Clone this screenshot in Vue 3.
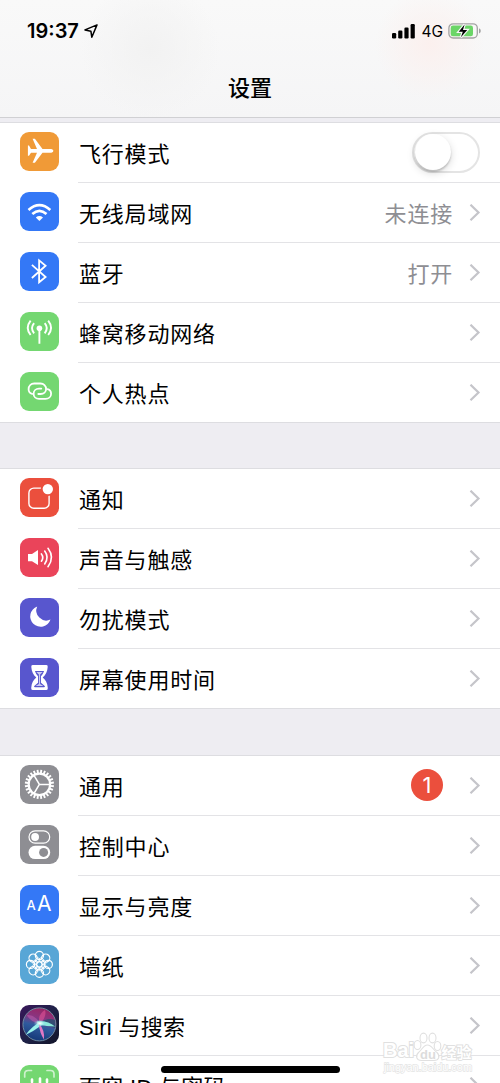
<script setup>
const sections = [
  {
    key: 'network',
    rows: [
      { icon: 'plane', label: '飞行模式', toggle: true },
      { icon: 'wifi', label: '无线局域网', value: '未连接' },
      { icon: 'bluetooth', label: '蓝牙', value: '打开' },
      { icon: 'cellular', label: '蜂窝移动网络' },
      { icon: 'hotspot', label: '个人热点' },
    ],
  },
  {
    key: 'alerts',
    rows: [
      { icon: 'notify', label: '通知' },
      { icon: 'sound', label: '声音与触感' },
      { icon: 'moon', label: '勿扰模式' },
      { icon: 'hourglass', label: '屏幕使用时间' },
    ],
  },
  {
    key: 'general',
    rows: [
      { icon: 'gear', label: '通用', badge: '1' },
      { icon: 'control', label: '控制中心' },
      { icon: 'display', label: '显示与亮度' },
      { icon: 'wallpaper', label: '墙纸' },
      { icon: 'siri', label: 'Siri 与搜索', mixed: true },
      { icon: 'face', label: '面容 ID 与密码', mixed: true },
    ],
  },
]
const teeth = Array.from({ length: 24 }, (_, i) => i * 15 + 7.5)
const petals = Array.from({ length: 8 }, (_, i) => i * 45)
</script>

<template>
  <div class="screen">
    <header class="header">
      <div class="status">
        <div class="status-left">
          <span class="time">19:37</span>
          <svg class="arrow" width="14" height="14" viewBox="0 0 14 14">
            <path d="M13 .9 1 5.900l5.900 1.300.9 6z" fill="none" stroke="#000" stroke-width="1.5" stroke-linejoin="round" />
          </svg>
        </div>
        <div class="status-right">
          <svg width="24" height="15" viewBox="0 0 24 15">
            <rect x="0" y="9" width="4.2" height="5.5" rx="1.2" />
            <rect x="6.2" y="6.5" width="4.2" height="8" rx="1.2" />
            <rect x="12.4" y="3.5" width="4.2" height="11" rx="1.2" />
            <rect x="18.6" y="0" width="4.2" height="14.5" rx="1.2" />
          </svg>
          <span class="net">4G</span>
          <svg width="34" height="16" viewBox="0 0 34 16">
            <rect x=".9" y=".8" width="28.4" height="14.2" rx="4.2" fill="none" stroke="#a3a3a3" stroke-width="1.3" />
            <path d="M31 5.3q1.8.8 1.8 2.6T31 10.5z" fill="#a3a3a3" />
            <rect x="2.7" y="2.6" width="22.3" height="10.6" rx="2.3" fill="#6bd567" />
            <path d="M16.6 1.6 10.700 8.700h4.100l-1.900 5.500L19.200 7h-4.200z" fill="#000" stroke="#f7f7f7" stroke-width="2.4" paint-order="stroke" />
          </svg>
        </div>
      </div>
      <h1 class="title">设置</h1>
    </header>

    <main class="content">
      <section v-for="s in sections" :key="s.key" class="section" :class="s.key">
        <div v-for="row in s.rows" :key="row.label" class="row">
          <svg class="icon" :class="row.icon" width="39" height="39" viewBox="0 0 39 39">
            <g v-if="row.icon === 'plane'" fill="#fff">
              <path d="M31.300 16.900H22.500L14.900 6.800H12.600L17 16.900H11L9 13.600H7.900V23.800H9L11 20.700H17L12.600 30.800H14.900L22.500 20.700H31.300Q33.400 20.300 33.400 18.800T31.300 16.900Z" />
            </g>
            <g v-else-if="row.icon === 'wifi'" fill="none" stroke="#fff" stroke-width="2.700">
              <path d="M8.500 17.900Q19.400 8.300 30.300 17.900" />
              <path d="M12.300 22Q19.400 15.700 26.500 22" />
              <path d="M15.800 25.400Q19.400 22.500 23 25.400L19.400 28.900Z" fill="#fff" stroke="none" />
            </g>
            <path v-else-if="row.icon === 'bluetooth'" d="M11.900 12.800 25.600 25 19.100 30.300V8.300L25.600 13.700 11.900 26" fill="none" stroke="#fff" stroke-width="1.800" />
            <g v-else-if="row.icon === 'cellular'" fill="none" stroke="#fff" stroke-width="1.900">
              <circle cx="19.400" cy="16.300" r="2.800" fill="#fff" stroke="none" />
              <path d="M19.400 17V31.700" />
              <path d="M14.100 11.200Q9.900 16.200 14.100 21.300M24.700 11.200Q28.900 16.200 24.700 21.300M10.600 8.600Q4.900 15.900 10.600 23M28.200 8.600Q33.900 15.900 28.200 23" />
            </g>
            <g v-else-if="row.icon === 'hotspot'" fill="none" stroke="#fff" stroke-width="1.800" stroke-linecap="round">
              <path d="M12.200 21.900C9.900 21.300 8.600 19.300 8.600 17.200C8.600 14 11 11.500 14.200 11.500H20.500C23.700 11.500 26.100 14 26.100 17C26.100 20 23.700 22 20.700 22H18.300" />
              <path d="M27.600 17.100C29.900 17.800 31.100 19.700 31.100 21.700C31.100 24.700 28.600 26.900 25.500 26.900H19C15.900 26.900 13.600 24.700 13.600 21.700C13.600 18.800 15.900 16.600 19 16.600H21.300" />
            </g>
            <g v-else-if="row.icon === 'notify'">
              <rect x="8.900" y="10.100" width="20.200" height="20.200" rx="4.900" fill="none" stroke="#fff" stroke-width="1.400" />
              <circle cx="27.800" cy="11.100" r="7" fill="#eb4f3d" />
              <circle cx="27.800" cy="11.100" r="5.200" fill="#fff" />
            </g>
            <g v-else-if="row.icon === 'sound'" fill="none" stroke="#fff" stroke-width="1.600" stroke-linecap="round">
              <path d="M8 16H12L18 12V27L12 23.200H8Z" fill="#fff" stroke="none" />
              <path d="M21.400 15.900Q24.100 19.500 21.400 23.200M24.700 13.100Q29.500 19.500 24.700 25.900M28 10.300Q35 19.500 28 28.700" />
            </g>
            <path v-else-if="row.icon === 'moon'" d="M17.200 8.500A10.400 10.400 0 1 0 30.500 21.600A10 10 0 0 1 17.200 8.500Z" fill="#fff" />
            <g v-else-if="row.icon === 'hourglass'">
              <path d="M12.600 7H26.400Q28 7 27.700 9C27.400 14 25.700 16.800 22.700 19.500C25.700 22 27.400 25 27.800 30Q28 32 26.400 32H12.600Q11 32 11.200 30C11.600 25 13.300 22 16.300 19.500C13.300 16.800 11.600 14 11.300 9Q11 7 12.600 7Z" fill="#fff" />
              <path d="M14.900 13H24.100Q23 16.300 21 18.200V24.700L25 28.300Q24.800 29.200 24 29.200H15Q14.200 29.200 14 28.300L18 24.700V18.200Q16 16.300 14.900 13Z" fill="#5856ce" />
              <path d="M16.300 14.100H22.700L20.100 16.600V25.900L23.500 28.100H15.500L18.900 25.900V16.600Z" fill="#fff" opacity=".7" />
            </g>
            <g v-else-if="row.icon === 'gear'" fill="none" stroke="#fff">
              <circle cx="19.400" cy="19.400" r="10.700" stroke-width="2.200" />
              <path v-for="a in teeth" :key="a" d="M30.500 19.400H34" stroke-width="1.900" :transform="`rotate(${a} 19.400 19.400)`" />
              <path d="M30 19.400H19.400L14 10.300M19.400 19.400 14 28.500" stroke-width="1.500" />
            </g>
            <g v-else-if="row.icon === 'control'">
              <rect x="9" y="5.900" width="20.700" height="12.200" rx="6.100" fill="none" stroke="#fff" stroke-width="1.200" />
              <circle cx="15.100" cy="12" r="3.900" fill="#fff" />
              <rect x="8.500" y="20.800" width="21.700" height="13.300" rx="6.650" fill="#fff" />
              <circle cx="23.600" cy="27.400" r="4.500" fill="#8e8e93" />
            </g>
            <g v-else-if="row.icon === 'display'" class="letters">
              <text class="small-a" x="6.600" y="25.200">A</text>
              <text class="large-a" x="17.100" y="26.200">A</text>
            </g>
            <g v-else-if="row.icon === 'wallpaper'" fill="none" stroke="#fff" stroke-width="1.200">
              <circle v-for="a in petals" :key="a" cx="19.400" cy="10.500" r="4.100" :transform="`rotate(${a} 19.400 19.400)`" />
              <circle v-for="a in petals" :key="'i' + a" cx="19.400" cy="14.800" r="2.300" stroke-width=".8" :transform="`rotate(${a + 22.5} 19.400 19.400)`" />
              <circle cx="19.400" cy="19.400" r="2.800" />
            </g>
            <g v-else-if="row.icon === 'siri'">
              <defs>
                <linearGradient id="siriBg" x1="0" y1="0" x2="1" y2="1">
                  <stop offset="0" stop-color="#39165a" /><stop offset=".5" stop-color="#1e2148" /><stop offset="1" stop-color="#111428" />
                </linearGradient>
                <linearGradient id="siriOrb" x1=".6" y1="0" x2=".35" y2="1">
                  <stop offset="0" stop-color="#9a2463" /><stop offset=".3" stop-color="#893580" /><stop offset=".55" stop-color="#2f5a9d" /><stop offset="1" stop-color="#143777" />
                </linearGradient>
                <radialGradient id="siriGlow"><stop offset="0" stop-color="#fff" /><stop offset=".35" stop-color="#d8fff8" stop-opacity=".7" /><stop offset="1" stop-color="#63cfee" stop-opacity="0" /></radialGradient>
              </defs>
              <rect width="39" height="39" fill="url(#siriBg)" />
              <circle cx="19.400" cy="19.400" r="16.500" fill="url(#siriOrb)" stroke="#7793a5" stroke-width=".9" />
              <path d="M19 19Q27 12 35 15V23Q27 20 19 19Z" fill="#24506f" opacity=".8" />
              <path d="M20 18Q14 9 7 10Q9 16 20 19Z" fill="#c55bad" opacity=".55" />
              <path d="M19 18Q18 9 25 5Q27 11 21 18Z" fill="#dd5094" opacity=".65" />
              <path d="M21 16.500Q12 21 5.500 30Q14 26 22 20Z" fill="#9af2ea" />
              <path d="M17 16.500Q28 15.500 35 21.500Q27 21.500 18 19.500Z" fill="#8be9d9" />
              <path d="M18.500 18Q25 25 24 34.500Q20 29 18.500 18Z" fill="#e078c4" />
              <ellipse cx="19.800" cy="18.300" rx="6.500" ry="3.600" fill="url(#siriGlow)" />
            </g>
            <g v-else fill="none" stroke="#fff" stroke-linecap="round">
              <path d="M4.700 12V9Q4.700 5.500 8.200 5.500H11.500M27 5.500H30.500Q34 5.500 34 9V12" stroke-width="1.700" opacity=".65" />
              <path d="M12 14.500V17M27 14.500V17M20 13.500V20.500H18" stroke-width="2.600" />
            </g>
          </svg>
          <div class="body">
            <span class="label" :class="{ mixed: row.mixed }">{{ row.label }}</span>
            <span v-if="row.value" class="value">{{ row.value }}</span>
            <span v-if="row.badge" class="badge">{{ row.badge }}</span>
            <span v-if="row.toggle" class="toggle"><i class="knob"></i></span>
            <svg v-else class="chevron" width="12" height="18" viewBox="0 0 12 18">
              <path d="M1.500.700 9.500 8.500l-8 7.800" fill="none" stroke="#c5c5ca" stroke-width="2.200" />
            </svg>
          </div>
        </div>
      </section>
    </main>

    <svg class="watermark" width="96" height="48" viewBox="0 0 96 48">
      <g class="outlined">
        <text class="bai" x="3" y="33" textLength="31" lengthAdjust="spacingAndGlyphs">Bai</text>
        <ellipse cx="37.500" cy="21" rx="3.400" ry="4.500" />
        <ellipse cx="43.500" cy="14" rx="3.500" ry="4.900" />
        <ellipse cx="52.500" cy="14" rx="3.500" ry="4.900" />
        <ellipse cx="57.500" cy="22" rx="3.300" ry="4.500" />
        <path d="M47.500 21C43 21 42 26 38.500 28.500C35 32 36.500 36.500 41.500 36.500H54C59 36.500 60.500 32 57 28.500C53 26 52 21 47.500 21Z" />
        <text class="jy" x="61.500" y="33.500" textLength="30" lengthAdjust="spacingAndGlyphs">经验</text>
      </g>
      <text class="du" x="40" y="34.500">du</text>
      <text class="url" x="4" y="46.500" textLength="88" lengthAdjust="spacingAndGlyphs">jingyan.baidu.com</text>
    </svg>
    <div class="home"></div>
  </div>
</template>

<style>
body { overflow: hidden; }
</style>

<style scoped>
.screen {
  position: relative;
  width: 500px;
  height: 1083px;
  overflow: hidden;
  background: #eeedf2;
  color: #000;
  font-family: Inter, "Noto Sans CJK SC", sans-serif;
}
.header {
  box-sizing: border-box;
  height: 118px;
  border-bottom: 1px solid #d0d0d3;
  background:
    radial-gradient(circle at 430px 44px, #fbf0ee 0, rgba(250, 243, 242, 0) 55px),
    radial-gradient(circle at 150px 50px, #f2f2f2 0, rgba(244, 244, 244, 0) 70px),
    linear-gradient(#f9f9f9, #f5f5f6);
}
.status { display: flex; justify-content: space-between; height: 62px; padding: 0 18px 0 27px; align-items: center; box-sizing: border-box; }
.status-left, .status-right { display: flex; align-items: center; }
.time { font-size: 20px; font-weight: 600; line-height: 24px; }
.arrow { margin-left: 5px; }
.status-right { gap: 5px; }
.net { padding-top: 2px; font-size: 15.5px; line-height: 20px; }
.title { margin: 10px 0 0; font-size: 22px; line-height: 32px; font-weight: 500; text-align: center; }
.content { padding-top: 4px; }
.section { background: #fff; border-top: 1px solid #dddde1; border-bottom: 1px solid #dddde1; }
.network { margin-bottom: 45px; }
.alerts { margin-bottom: 46px; }
.row { display: flex; height: 60px; padding-left: 20px; box-sizing: border-box; }
.row:last-child { height: 59px; }
.row:last-child .body { border-bottom-color: transparent; }
.icon { flex: none; margin-top: 9px; border-radius: 9px; }
.plane { background: #f09a37; }
.wifi, .bluetooth, .display { background: #3478f6; }
.cellular, .hotspot, .face { background: #74d771; }
.notify { background: #eb4f3d; }
.sound { background: #ea445a; }
.moon, .hourglass { background: #5856ce; }
.gear, .control { background: #8e8e93; }
.wallpaper { background: #58a6d6; }
.letters { fill: #fff; font-family: Inter, sans-serif; }
.small-a { font-size: 13px; font-weight: 500; }
.large-a { font-size: 21px; font-weight: 400; }
.body { flex: 1; display: flex; align-items: center; margin-left: 19px; padding-right: 20px; border-bottom: 1px solid #e3e3e6; box-sizing: border-box; height: 60px; }
.label { flex: 1; padding: 2px 0 0 1px; font-size: 22px; letter-spacing: .8px; line-height: 32px; white-space: nowrap; }
.label.mixed { padding-top: 4px; font-family: "Liberation Sans", "Noto Sans CJK SC", sans-serif; letter-spacing: .3px; }
.value { padding-top: 2px; margin-right: 17px; font-size: 22px; letter-spacing: .8px; line-height: 32px; color: #8e8e93; }
.chevron { flex: none; margin-right: -1px; }
.value + .chevron { margin-left: -1px; }
.badge { width: 32px; height: 32px; margin: 0 26px 2px 0; border-radius: 50%; background: #eb4f3d; color: #fff; font-size: 22px; line-height: 32px; text-align: center; }
.toggle { width: 68px; height: 41px; box-sizing: border-box; border: 2px solid #e4e4e4; border-radius: 21px; padding: 1px; }
.knob { display: block; width: 36px; height: 36px; margin-top: -1px; border-radius: 50%; background: #fff; box-shadow: 0 3px 8px rgba(0, 0, 0, .15), 0 2px 2px rgba(0, 0, 0, .18); }
.watermark { position: absolute; left: 380px; top: 1024px; overflow: visible; font-family: "Liberation Sans", "Noto Sans CJK SC", sans-serif; }
.outlined { fill: #fff; stroke: #e0e0e0; stroke-width: 1.1px; }
.outlined text { stroke-width: 2px; paint-order: stroke; }
.bai { font-size: 21px; font-weight: 700; }
.jy { font-size: 15px; font-weight: 700; }
.outlined .jy { stroke-width: 1.8px; }
.du { font-size: 13px; font-weight: 700; fill: #dcdcdc; }
.url { font-size: 11px; fill: #fff; stroke: #e4e4e4; stroke-width: 1.3px; paint-order: stroke; }
.home { position: absolute; left: 161px; top: 1066px; width: 179px; height: 6.5px; border-radius: 4px; background: #000; }
</style>
